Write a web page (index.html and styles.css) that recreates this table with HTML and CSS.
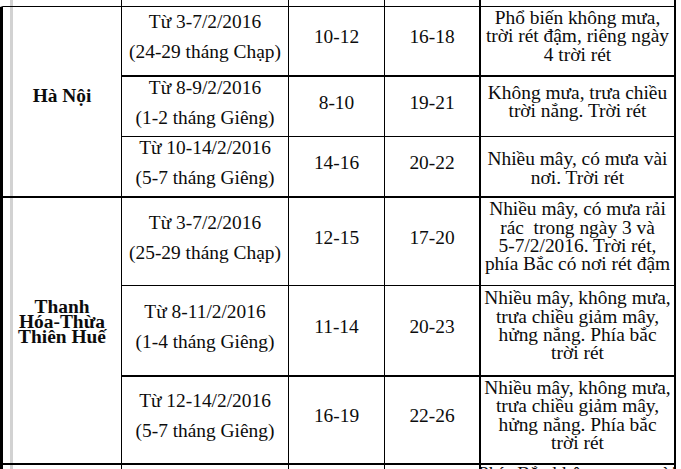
FILE: index.html
```html
<!DOCTYPE html>
<html lang="vi">
<head>
<meta charset="utf-8">
<title>Dự báo thời tiết Tết</title>
<link rel="stylesheet" href="styles.css">
</head>
<body>
<div class="grid">
  <div class="c col1 stub-top"></div>
  <div class="c stub-top"></div>
  <div class="c stub-top"></div>
  <div class="c stub-top col4"></div>
  <div class="c stub-top col5"></div>

  <div class="c col1 city hn">Hà Nội</div>
  <div class="c date r1">Từ 3-7/2/2016<br>(24-29 tháng Chạp)</div>
  <div class="c num r1">10-12</div>
  <div class="c num r1 col4">16-18</div>
  <div class="c desc r1 col5">Phổ biến không mưa,<br>trời rét đậm, riêng ngày<br>4 trời rét</div>

  <div class="c date r2">Từ 8-9/2/2016<br>(1-2 tháng Giêng)</div>
  <div class="c num r2">8-10</div>
  <div class="c num r2 col4">19-21</div>
  <div class="c desc r2 col5">Không mưa, trưa chiều<br>trời nắng. Trời rét</div>

  <div class="c date r3">Từ 10-14/2/2016<br>(5-7 tháng Giêng)</div>
  <div class="c num r3">14-16</div>
  <div class="c num r3 col4">20-22</div>
  <div class="c desc r3 col5 low">Nhiều mây, có mưa vài<br>nơi. Trời rét</div>

  <div class="c col1 city th">Thanh<br>Hóa-Thừa<br>Thiên Huế</div>
  <div class="c date r4">Từ 3-7/2/2016<br>(25-29 tháng Chạp)</div>
  <div class="c num r4">12-15</div>
  <div class="c num r4 col4">17-20</div>
  <div class="c desc r4 col5">Nhiều mây, có mưa rải<br>rác&nbsp; trong ngày 3 và<br>5-7/2/2016. Trời rét,<br>phía Bắc có nơi rét đậm</div>

  <div class="c date r5">Từ 8-11/2/2016<br>(1-4 tháng Giêng)</div>
  <div class="c num r5">11-14</div>
  <div class="c num r5 col4">20-23</div>
  <div class="c desc r5 col5">Nhiều mây, không mưa,<br>trưa chiều giảm mây,<br>hửng nắng. Phía bắc<br>trời rét</div>

  <div class="c date r6">Từ 12-14/2/2016<br>(5-7 tháng Giêng)</div>
  <div class="c num r6">16-19</div>
  <div class="c num r6 col4">22-26</div>
  <div class="c desc r6 col5">Nhiều mây, không mưa,<br>trưa chiều giảm mây,<br>hửng nắng. Phía bắc<br>trời rét</div>

  <div class="c col1 stub-bot"></div>
  <div class="c stub-bot"></div>
  <div class="c stub-bot"></div>
  <div class="c stub-bot col4"></div>
  <div class="c stub-bot col5 desc-top">Phía Bắc không mưa, trời</div>
</div>
</body>
</html>
```

FILE: styles.css
```css
html, body {
  margin: 0;
  padding: 0;
  background: #ffffff;
  overflow: hidden;
}

body {
  width: 681px;
  height: 469px;
  font-family: "Liberation Serif", "Times New Roman", serif;
  font-size: 19.4px;
  color: #0c0c0c;
}

.grid {
  display: grid;
  grid-template-columns: 122px 167px 96px 96px 195px;
  grid-template-rows: 7px 70px 60px 61px 88px 91px 88px 30px;
  width: 676px;
}

.c {
  box-sizing: border-box;
  border-right: 1px solid #000;
  border-bottom: 1px solid #000;
  display: flex;
  flex-direction: column;
  justify-content: center;
  align-items: center;
  text-align: center;
  white-space: nowrap;
  overflow: hidden;
}

.col1 {
  grid-column: 1;
  border-left: 3px solid #000;
  background-image: linear-gradient(to right,
    transparent 7px, #d2d2d2 7px, #d2d2d2 10px, transparent 10px);
}

.stub-top.col1 {
  border-left-color: #ffffff;
}

.col4,
.col5 {
  border-right-width: 2px;
}

.city {
  font-weight: bold;
  border-bottom-width: 2px;
}

.hn {
  grid-row: 2 / span 3;
  padding-bottom: 12px;
}

.th {
  grid-row: 5 / span 3;
  line-height: 15px;
  padding-bottom: 19px;
}

.date {
  line-height: 30px;
  padding-bottom: 8px;
}

.num {
  padding-bottom: 8px;
}

.desc {
  line-height: 18.4px;
  padding-bottom: 9px;
}

.desc.low {
  padding-bottom: 0;
  padding-top: 4px;
}

.r1, .r3, .r5, .r6 {
  border-bottom-width: 2px;
}

.stub-bot {
  border-bottom: 0;
}

.desc-top {
  justify-content: flex-start;
  line-height: 18.4px;
}
```
